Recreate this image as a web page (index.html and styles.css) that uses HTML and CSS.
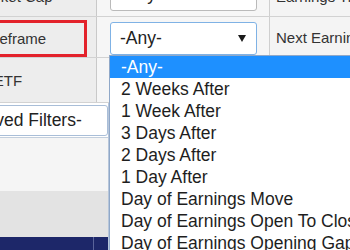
FILE: index.html
```html
<!DOCTYPE html>
<html>
<head>
<meta charset="utf-8">
<link rel="stylesheet" href="styles.css">
</head>
<body>
<div class="page">
  <div class="grid">
    <div class="row r1">
      <div class="lbl">Market Cap</div>
      <div class="sel-cell"><div class="select">-Any-</div></div>
      <div class="lbl2">Earnings Timing</div>
    </div>
    <div class="row r2">
      <div class="lbl"><div class="mark">Timeframe</div></div>
      <div class="sel-cell">
        <div class="select focus">
          <span class="sel-text">-Any-</span>
          <svg class="arrow" width="8" height="7" viewBox="0 0 8 7"><polygon points="0,0 8,0 4,7" fill="#1a1a1a"/></svg>
        </div>
      </div>
      <div class="lbl2">Next Earnings Date</div>
    </div>
    <div class="row r3">
      <div class="lbl">Is ETF</div>
      <div class="sel-cell"></div>
      <div class="lbl2"></div>
    </div>
  </div>
  <div class="lower">
    <div class="side">
      <div class="saved">-Saved Filters-</div>
      <div class="light"></div>
      <div class="band"></div>
      <div class="nav"><span class="nav-a"></span><span class="nav-b"></span></div>
    </div>
  </div>
  <ul class="dropdown">
    <li class="hl">-Any-</li>
    <li>2 Weeks After</li>
    <li>1 Week After</li>
    <li>3 Days After</li>
    <li>2 Days After</li>
    <li>1 Day After</li>
    <li>Day of Earnings Move</li>
    <li>Day of Earnings Open To Close</li>
    <li>Day of Earnings Opening Gap</li>
    <li>Day of Earnings Close To Close</li>
  </ul>
</div>
</body>
</html>
```
FILE: styles.css
```css
body {
  margin: 0;
  background: #fff;
  font-family: "Liberation Sans", Arial, sans-serif;
}
.page {
  position: relative;
  width: 350px;
  height: 250px;
  overflow: hidden;
}
.grid {
  margin-left: -30px;
  margin-top: -24px;
}
.row {
  display: grid;
  grid-template-columns: 127px 173px 1fr;
  border-bottom: 1px solid #d2d2d2;
}
.r1, .r2 { height: 40px; }
.r3 { height: 44px; }
.lbl {
  background: #ededed;
  border-right: 1px solid #c9c9c9;
  display: flex;
  align-items: center;
  padding-left: 5px;
  font-size: 15px;
  color: #333;
  white-space: nowrap;
}
.r2 .lbl {
  padding-left: 0;
  align-items: flex-start;
}
.r3 .lbl { padding-left: 8px; }
.mark {
  flex: 1;
  margin-top: 3px;
  margin-right: 9px;
  height: 37px;
  box-sizing: border-box;
  border: 3px solid #e3222b;
  padding-left: 2px;
  display: flex;
  align-items: center;
}
.sel-cell {
  background: #f6f6f6;
  border-right: 1px solid #cfcfcf;
  display: flex;
  padding-left: 13px;
}
.r1 .sel-cell { align-items: flex-end; padding-bottom: 5px; }
.r2 .sel-cell { align-items: flex-start; padding-top: 5px; }
.select {
  box-sizing: border-box;
  width: 147px;
  height: 33px;
  background: #fff;
  border: 1px solid #bababa;
  border-radius: 3px;
  display: flex;
  align-items: center;
  padding-left: 9px;
  padding-right: 10px;
  font-size: 17.5px;
  color: #222;
}
.focus { border-color: #7fb2e5; }
.sel-text { flex: 1; }
.arrow { display: block; }
.lbl2 {
  background: #f4f4f4;
  padding-left: 6px;
  display: flex;
  align-items: center;
  font-size: 15px;
  color: #333;
  white-space: nowrap;
  overflow: hidden;
}
.lower { display: flex; }
.side {
  width: 109px;
  height: 147px;
  box-sizing: border-box;
  border-right: 1px solid #b7c6da;
  background: #fff;
  display: flex;
  flex-direction: column;
}
.saved {
  margin-top: 2px;
  margin-bottom: 1px;
  margin-left: -42px;
  height: 31px;
  box-sizing: border-box;
  border: 1px solid #a9bed8;
  border-radius: 3px;
  background: #fff;
  padding-left: 9px;
  display: flex;
  align-items: center;
  font-size: 17.5px;
  color: #222;
  white-space: nowrap;
}
.light {
  height: 54px;
  box-sizing: border-box;
  border-top: 1px solid #c3cfdd;
  background: #f5f5f5;
}
.band {
  height: 46px;
  background: #e3e3e3;
}
.nav {
  flex: 1;
  background: #1d2769;
  display: flex;
}
.nav-a {
  width: 93px;
  border-right: 1px solid #5a649a;
}
.dropdown {
  position: absolute;
  left: 109px;
  top: 55px;
  width: 260px;
  margin: 0;
  padding: 0;
  list-style: none;
  background: #fff;
  border: 1px solid #90a8c8;
  font-size: 17.5px;
  color: #1e1e1e;
}
.dropdown li {
  height: 22px;
  line-height: 22px;
  padding-left: 11px;
  white-space: nowrap;
}
.dropdown li.hl {
  background: #1e90ff;
  color: #fff;
}
```
